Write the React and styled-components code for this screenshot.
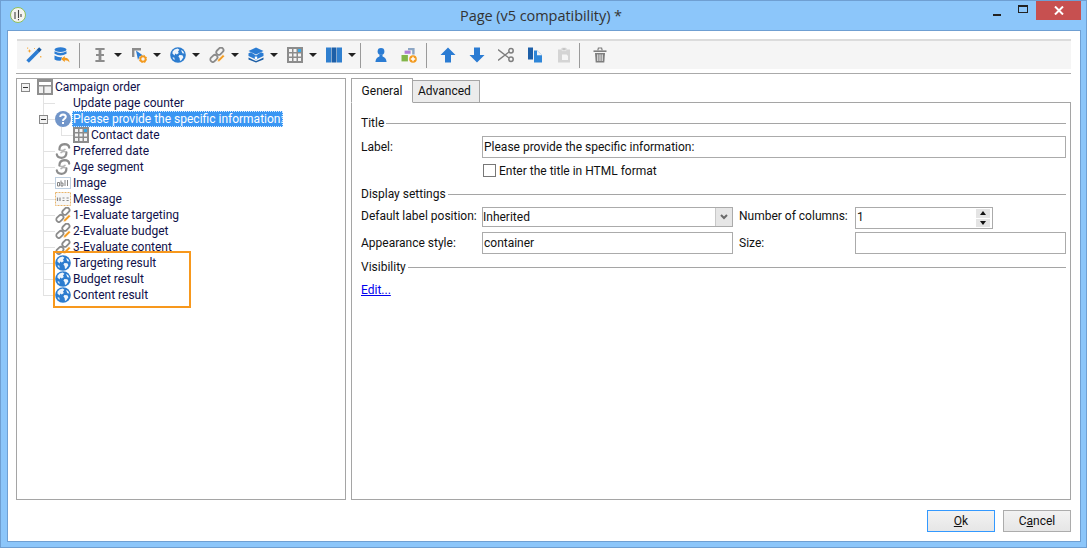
import React from 'react';
import styled, { createGlobalStyle } from 'styled-components';

const Global = createGlobalStyle`
  html, body { margin: 0; padding: 0; background: #fff; }
  body { font-family: "Roboto", "Liberation Sans", sans-serif; font-size: 12px; color: #111; }
`;

const Window = styled.div`
  box-sizing: border-box; width: 1087px; height: 548px;
  background: #8cc6fa; border: 1px solid #6f9fd2;
  display: flex; flex-direction: column;
`;
const TitleBar = styled.div`
  height: 29px; display: flex; align-items: flex-start; position: relative; flex: none;
`;
const AppLogo = styled.svg`width: 16px; height: 16px; margin: 6px 0 0 9px; flex: none;`;
const TitleText = styled.div`
  flex: 1; text-align: center; font-size: 14.5px; line-height: 29px; color: #333; padding-left: 72px;
  font-family: "Open Sans", sans-serif; letter-spacing: -0.05px;
`;
const WinControls = styled.div`display: flex; align-items: flex-start; margin-right: 5px; flex: none;`;
const MinBtn = styled.div`
  width: 26px; height: 19px; display: flex; align-items: flex-end; justify-content: center; padding-bottom: 4px; box-sizing: border-box;
  &::before { content: ""; width: 8px; height: 2px; background: #222; }
`;
const MaxBtn = styled.div`
  width: 26px; height: 19px; display: flex; align-items: center; justify-content: center; padding-bottom: 3px; box-sizing: border-box;
  &::before { content: ""; width: 8px; height: 5px; border: 1px solid #222; border-top-width: 2px; }
`;
const CloseBtn = styled.div`
  width: 45px; height: 19px; background: #c75050; display: flex; align-items: center; justify-content: center; margin-left: 0;
`;
const Client = styled.div`
  box-sizing: border-box; height: 512px; margin: 0 5px 0 6px; background: #fff; border: 1px solid #6f9fd2;
  padding: 8px 9px 0 9px; display: flex; flex-direction: column; flex: none;
`;
const Toolbar = styled.div`
  box-sizing: border-box; height: 30px; background: #f5f5f5; border-top: 2px solid #dcdcdc;
  display: flex; align-items: center; padding-left: 3px; flex: none;
`;
const ToolButton = styled.div`
  width: ${p => p.$w || 28}px; height: 28px; display: flex; align-items: center; justify-content: center; flex: none;
  svg { width: 16px; height: 16px; display: block; }
`;
const Drop = styled.div`width: 39px; height: 28px; display: flex; align-items: center; flex: none;`;
const DropIcon = styled(ToolButton)`width: 28px;`;
const Caret = styled.div`
  width: 0; height: 0; margin-left: 0; border-left: 4px solid transparent; border-right: 4px solid transparent; border-top: 4px solid #222;
`;
const ToolSep = styled.div`
  width: 1px; height: 25px; background: #9a9a9a; flex: none; margin: 0 6px 0 ${p => p.$ml}px;
`;
const Rule = styled.div`height: 1px; background: #aaa; margin-top: 4px; margin-left: -1px; flex: none;`;
const Main = styled.div`height: 422px; margin-top: 4px; margin-left: -1px; display: flex; gap: 5px; flex: none;`;
const TreePanel = styled.div`
  box-sizing: border-box; width: 330px; border: 1px solid #a5a5a5; display: flex; flex-direction: column; flex: none;
  padding-top: 0;
`;
const Row = styled.div`display: flex; height: 16px; align-items: center; flex: none;`;
const Cell = styled.div`
  height: 16px; flex: none; width: ${p => p.$w}px; display: flex; align-items: center; position: relative;
  background-repeat: no-repeat;
  ${p => p.$v ? `background-image: linear-gradient(#e2e2e2,#e2e2e2); background-size: 1px ${p.$v === 'half' ? '8px' : '16px'}; background-position: ${p.$x}px 0;` : ''}
  &::after {
    ${p => p.$h ? `content: ""; position: absolute; left: ${p.$x}px; right: 0; top: 8px; height: 1px; background: #e2e2e2;` : ''}
  }
`;
const Expander = styled.div`
  box-sizing: border-box; width: 9px; height: 9px; margin-left: ${p => p.$ml}px; border: 1px solid #888; background: #f2f2f2;
  display: flex; align-items: center; justify-content: center; position: relative; z-index: 1; flex: none;
  &::before { content: ""; width: 5px; height: 1px; background: #333; }
`;
const TreeIcon = styled.svg`width: 16px; height: 16px; flex: none; display: block;`;
const IconSpacer = styled.div`width: 16px; height: 16px; flex: none;`;
const RowLabel = styled.div`
  margin-left: 2px; line-height: 16px; white-space: nowrap; color: #10104a;
`;
const SelectedLabel = styled.div`
  margin-left: 1px; line-height: 14px; padding: 0; height: 14px; white-space: nowrap; color: #fff; background: #3a96f3;
  border: 1px dotted #d8ecff; width: 209px;
`;
const Highlight = styled.div`
  position: relative;
  &::after {
    content: ""; position: absolute; left: 36px; top: -4px; width: 134px; height: 53px; border: 2px solid #f7981d; pointer-events: none;
  }
`;
const Right = styled.div`flex: 1; display: flex; flex-direction: column; min-width: 0;`;
const Tabs = styled.div`display: flex; align-items: flex-end; height: 25px; flex: none; margin-bottom: -1px;`;
const TabActive = styled.div`
  box-sizing: border-box; width: 62px; height: 25px; background: #fff; border: 1px solid #a5a5a5; border-bottom: 1px solid #fff;
  text-align: center; line-height: 24px; position: relative; z-index: 1; padding-top: 0;
`;
const Tab = styled.div`
  box-sizing: border-box; width: 68px; height: 23px; margin-left: -1px; background: #ececec; border: 1px solid #a5a5a5;
  text-align: left; padding-left: 5px; line-height: 21px;
`;
const TabPanel = styled.div`
  box-sizing: border-box; flex: 1; border: 1px solid #a5a5a5; padding: 12px 4px 0 9px; display: flex; flex-direction: column;
`;
const SectionHead = styled.div`
  display: flex; align-items: center; gap: 2px; height: 16px; margin-top: ${p => p.$mt || 0}px; line-height: 16px;
  &::after { content: ""; flex: 1; height: 1px; background: #a5a5a5; }
`;
const FieldLabel = styled.div`white-space: nowrap; line-height: 16px;`;
const Field = styled.div`
  box-sizing: border-box; height: ${p => p.$h}px; border: 1px solid #ababab; background: #fff;
  padding-left: ${p => p.$pl ?? 2}px; display: flex; align-items: center; white-space: nowrap; width: ${p => p.$w ? p.$w + 'px' : 'auto'};
`;
const LabelRow = styled.div`display: grid; grid-template-columns: 121px 1fr; align-items: center; margin-top: 5px;`;
const CheckRow = styled.div`display: flex; align-items: center; margin: 6px 0 0 122px; height: 13px;`;
const CheckBox = styled.div`box-sizing: border-box; width: 13px; height: 13px; border: 1px solid #777; background: #fff; flex: none;`;
const CheckLabel = styled.div`margin: 2px 0 0 3px; line-height: 13px;`;
const FieldGrid = styled.div`
  display: grid; grid-template-columns: 121px 251px 122px 1fr; margin-top: ${p => p.$mt}px; align-items: start;
`;
const SideLabel = styled(FieldLabel)`padding-left: 6px; margin-top: ${p => p.$mt || 0}px;`;
const MainLabel = styled(FieldLabel)`margin-top: ${p => p.$mt || 0}px;`;
const FieldValue = styled.div`flex: 1; margin-top: ${p => p.$mt || 0}px;`;
const ComboArrow = styled.div`
  width: 16px; height: 18px; background: #e6e6e6; border-left: 1px solid #c8c8c8; display: flex; align-items: center; justify-content: center; flex: none;
`;
const Spin = styled.div`
  width: 14px; height: 18px; margin-right: 2px; display: flex; flex-direction: column; gap: 1px; background: #fff; flex: none; border: 0;
`;
const SpinPart = styled.div`
  flex: 1; background: #e4e4e4; display: flex; align-items: center; justify-content: center;
  &::before { content: ""; width: 0; height: 0; border-left: 3px solid transparent; border-right: 3px solid transparent;
    ${p => p.$up ? 'border-bottom: 4px solid #111;' : 'border-top: 4px solid #111;'} }
`;
const EditLink = styled.a`
  margin-top: 7px; line-height: 16px; color: #0000ee; text-decoration: underline; align-self: flex-start;
`;
const Footer = styled.div`display: flex; justify-content: flex-end; gap: 8px; margin-top: 10px; flex: none;`;
const DlgButton = styled.div`
  box-sizing: border-box; width: 68px; height: 22px; text-align: center; line-height: 20px;
  background: linear-gradient(#f2f2f2, #e6e6e6); border: 1px solid ${p => p.$def ? '#3399ff' : '#acacac'};
  u { text-decoration: underline; }
`;

const Globe = () => (
  <>
    <circle cx="8" cy="8" r="7.8" fill="#2c7ccf" />
    <path d="M4.5 2.6 7.6 1.4 9.4 2.8 8 4.6 8.8 6 6.8 7.4 5.2 6.6 4.6 8.6 2.4 6.6 2.6 4.4Z" fill="#eef5fc" />
    <path d="M9.4 8 12.4 8.2 13.4 10.2 11.4 13.2 10 14 9.6 11 8.4 9.6Z" fill="#eef5fc" />
    <path d="M11 3 13 4 14.4 6.4 12.4 6.2Z" fill="#eef5fc" />
    <path d="M2.6 10 4.4 10.8 4.8 13 3 12Z" fill="#cfe2f5" />
  </>
);
const Chain = ({ orange }) => (
  <>
    <g fill="none" stroke="#8b8b8b" strokeWidth="1.8">
      <rect x="8.4" y="0.2" width="5" height="8" rx="2.5" transform="rotate(45 10.9 4.2)" />
      <rect x="2.4" y="7.4" width="5" height="8" rx="2.5" transform="rotate(45 4.9 11.4)" />
    </g>
    {orange && <path d="M8.4 15 9 12.6 14 7.6 15.6 9.2 10.6 14.2Z" fill="#f39a1e" stroke="#fff" strokeWidth="0.5" />}
  </>
);
const BrokenChain = () => (
  <g fill="none" strokeLinecap="round">
    <path d="M4.4 6.6 Q4.4 1.6 9.4 1.2 Q14 1.4 14.2 4.6" stroke="#8d8d8d" strokeWidth="2.2" />
    <path d="M5.6 7.2 Q8 8 10 6.4" stroke="#b5b5b5" strokeWidth="1.6" />
    <path d="M11.4 9.4 Q11.6 14.6 6.6 14.8 Q2.2 14.6 1.8 11.4" stroke="#8d8d8d" strokeWidth="2.2" />
    <path d="M10.4 8.8 Q8 8 6 9.6" stroke="#b5b5b5" strokeWidth="1.6" />
  </g>
);
const TableGrid = () => (
  <>
    <rect x="0" y="0" width="16" height="16" fill="#8c8c8c" />
    {[2, 6.5, 11].map(x => [2, 6.5, 11].map(y => (
      <rect key={`${x}${y}`} x={x} y={y} width="3" height="3" fill={x === 11 && y === 2 ? '#39a9e8' : '#f4f4f4'} />
    )))}
  </>
);

const I = {
  root: <><rect width="16" height="16" fill="#8f8f8f" /><rect x="2" y="3" width="12" height="3" fill="#fff" /><rect x="2" y="7.5" width="4" height="6.5" fill="#f0f0f0" /><rect x="7.5" y="7.5" width="6.5" height="6.5" fill="#f0f0f0" /></>,
  question: <><circle cx="8" cy="8" r="8" fill="#7195c9" /><path d="M5.2 6 Q5.4 3.4 8 3.4 Q10.8 3.5 10.8 5.8 Q10.8 7 9.4 7.8 Q8 8.6 8 10" fill="none" stroke="#fff" strokeWidth="2" /><rect x="7" y="11" width="2" height="2" fill="#fff" /></>,
  abl: <><rect x="0.5" y="2.5" width="15" height="11" fill="#fff" stroke="#7f9fbf" strokeDasharray="1 1" /><path d="M2.5 11V7.5h2V11h-2M6 5.5V11h2V8H6M10 5v6M12.5 5v6" fill="none" stroke="#777" strokeWidth="0.9" /></>,
  msg: <><rect x="0.5" y="1.5" width="15" height="13" fill="#f7f7f7" stroke="#e9b46a" strokeDasharray="2 1" /><path d="M2.5 10V6.5M5 10V6.5M7.5 7h2M7.5 9.5h2M11.5 7h2.2M11.5 9.5h2.2" stroke="#8a8a8a" strokeWidth="1.2" /></>,
};

const TreeSvg = ({ children }) => <TreeIcon viewBox="0 0 16 16">{children}</TreeIcon>;

function Level1({ icon, label, last }) {
  return (
    <Row>
      <Cell $w={20} />
      <Cell $w={18} $x={6} $v={last ? 'half' : 'full'} $h />
      {icon ? <TreeSvg>{icon}</TreeSvg> : <IconSpacer />}
      <RowLabel>{label}</RowLabel>
    </Row>
  );
}

const Svg = ({ children, vb = '0 0 16 16' }) => <svg viewBox={vb}>{children}</svg>;

const T = {
  wand: <Svg><path d="M1.6 14.4 11.8 4.2" stroke="#2b7cd3" strokeWidth="3.6" /><path d="M11.8 4.2 14.4 1.6" stroke="#1c5ea6" strokeWidth="3.6" /><path d="M3.5 2 4 3.6 5.6 4 4 4.5 3.5 6 3 4.5 1.4 4 3 3.6Z" fill="#f39a1e" /><path d="M1 0.5h1.2v1.2H1zM14 9h1.4v1.4H14zM8 1h1v1H8z" fill="#f6b352" /></Svg>,
  db: <Svg><ellipse cx="6.5" cy="2.6" rx="6" ry="2.4" fill="#2b7cd3" /><path d="M0.5 4.2Q6.5 7.6 12.5 4.2V6.8Q6.5 10 0.5 6.8Z" fill="#2b7cd3" /><path d="M0.5 8.6Q5 10.8 8 10L7 13.6Q3 14 0.5 12.4Z" fill="#2b7cd3" /><path d="M15.6 15.6Q15 10.6 10.8 10.8V9L7 12 10.8 15V13.2Q14 13 15.6 15.6Z" fill="#f39a1e" /></Svg>,
  cursor: <Svg vb="0 0 16 16"><path d="M3.4 1h9.2v2H9.4v4h2.6v2H9.4v4h3.2v2H3.4v-2h3.2V9H4V7h2.6V3H3.4Z" fill="#8c8c8c" /></Svg>,
  pointer: <Svg><path d="M1 1h9v2.4H3.4V10H1Z" fill="#8c8c8c" /><path d="M5 3.6 12 8.6 8.6 9.2 7 13Z" fill="#2b7cd3" /><circle cx="12" cy="12" r="2.6" fill="none" stroke="#f39a1e" strokeWidth="1.8" /><circle cx="12" cy="12" r="3.8" fill="none" stroke="#f39a1e" strokeWidth="1" strokeDasharray="1.4 1.6" /></Svg>,
  globe: <Svg><Globe /></Svg>,
  link: <Svg><Chain orange /></Svg>,
  layers: <Svg><path d="M8 0.5 15.5 4 8 7.5 0.5 4Z" fill="#2b7cd3" /><path d="M0.5 6.2 3 5.2 8 8.6 13 5.2 15.5 6.2V9L8 12.6 0.5 9Z" fill="#2b7cd3" /><path d="M0.5 10.6 5.5 13 8 14 10.5 13 15.5 10.6V12.4L8 15.6 0.5 12.4Z" fill="#1c5ea6" /><rect x="6.8" y="9.6" width="2.4" height="2.4" fill="#fff" /></Svg>,
  table: <Svg><TableGrid /></Svg>,
  cols: <Svg><rect x="0" y="0.5" width="5" height="15" fill="#2f7fcf" /><rect x="5.5" y="0.5" width="5" height="15" fill="#1d5fa8" /><rect x="11" y="0.5" width="5" height="15" fill="#2f7fcf" /></Svg>,
  person: <Svg><circle cx="8" cy="4.4" r="3.4" fill="#2b7cd3" /><path d="M6.6 7.4h2.8L9.6 9.6Q13 10.4 13.6 15H2.4Q3 10.4 6.4 9.6Z" fill="#2b7cd3" /></Svg>,
  add: <Svg><rect x="3.6" y="3.6" width="6" height="3.2" fill="#b07fd8" /><path d="M7 1h6.6v6.4h-2.4V3.2H7Z" fill="#8ca6c4" /><rect x="0.5" y="8" width="6.4" height="6.4" fill="#82b54a" /><circle cx="12" cy="12" r="3.8" fill="#f39a1e" /><path d="M9.8 12h4.4M12 9.8v4.4" stroke="#fff" strokeWidth="1.4" /></Svg>,
  up: <Svg><path d="M8 0.5 15.5 8H11V15.5H5V8H0.5Z" fill="#2b7cd3" /></Svg>,
  down: <Svg><path d="M8 15.5 15.5 8H11V0.5H5V8H0.5Z" fill="#2b7cd3" /></Svg>,
  scissors: <Svg><circle cx="13" cy="3.8" r="2.2" fill="none" stroke="#7e7e7e" strokeWidth="1.5" /><circle cx="13" cy="12.2" r="2.2" fill="none" stroke="#7e7e7e" strokeWidth="1.5" /><path d="M0 2.6 11 11M0 13.4 11 5" stroke="#7e7e7e" strokeWidth="1.4" /></Svg>,
  copy: <Svg><path d="M1 0.5h5V12.5H1Z" fill="#1d5fa8" /><path d="M7 3.6h3.2L15 8.2V15.5H7Z" fill="#2f86d8" /><path d="M10 3.6 15 8.2H10Z" fill="#f5f5f5" /></Svg>,
  paste: <Svg><path d="M2 2.4h3V1.2h6v1.2h3V15.5H2Z" fill="#d4d4d4" /><path d="M6 0.6h4V3.6H6Z" fill="#c4c4c4" stroke="#f5f5f5" strokeWidth="0.6" /><path d="M6 7.6h4.6L12 9v4H6Z" fill="#f5f5f5" /></Svg>,
  trash: <Svg><path d="M1.5 3.4h13V5h-13Z" fill="#7e7e7e" /><path d="M5.8 3.4 6.4 1h3.2l.6 2.4" fill="none" stroke="#7e7e7e" strokeWidth="1.2" /><path d="M3 6h10l-.7 9.6H3.7Z" fill="#7e7e7e" /><path d="M5.8 7.4v6.6M8 7.4v6.6M10.2 7.4v6.6" stroke="#f5f5f5" strokeWidth="1" /></Svg>,
};

const DropTool = ({ icon }) => (
  <Drop>
    <DropIcon>{icon}</DropIcon>
    <Caret />
  </Drop>
);

export default function App() {
  return (
    <>
      <Global />
      <Window>
        <TitleBar>
          <AppLogo viewBox="0 0 16 16">
            <circle cx="8" cy="8" r="7.5" fill="#f4f4f0" stroke="#8fbf58" strokeWidth="1" />
            <path d="M5 5v7M8.5 3v8M11 7v3M8.5 12v1.2" stroke="#444" strokeWidth="1.1" fill="none" />
          </AppLogo>
          <TitleText>Page (v5 compatibility) *</TitleText>
          <WinControls>
            <MinBtn />
            <MaxBtn />
            <CloseBtn>
              <svg width="10" height="9" viewBox="0 0 10 9"><path d="M1 0.5 9 8.5M9 0.5 1 8.5" stroke="#fff" strokeWidth="2" /></svg>
            </CloseBtn>
          </WinControls>
        </TitleBar>
        <Client>
          <Toolbar>
            <ToolButton>{T.wand}</ToolButton>
            <ToolButton>{T.db}</ToolButton>
            <ToolSep $ml={3} />
            <DropTool icon={T.cursor} />
            <DropTool icon={T.pointer} />
            <DropTool icon={T.globe} />
            <DropTool icon={T.link} />
            <DropTool icon={T.layers} />
            <DropTool icon={T.table} />
            <DropTool icon={T.cols} />
            <ToolSep $ml={1} />
            <ToolButton>{T.person}</ToolButton>
            <ToolButton>{T.add}</ToolButton>
            <ToolSep $ml={3} />
            <ToolButton $w={29}>{T.up}</ToolButton>
            <ToolButton $w={29}>{T.down}</ToolButton>
            <ToolButton $w={29}>{T.scissors}</ToolButton>
            <ToolButton $w={29}>{T.copy}</ToolButton>
            <ToolButton $w={29}>{T.paste}</ToolButton>
            <ToolSep $ml={1} />
            <ToolButton>{T.trash}</ToolButton>
          </Toolbar>
          <Rule />
          <Main>
            <TreePanel>
              <Row>
                <Cell $w={20}><Expander $ml={4} /></Cell>
                <TreeSvg>{I.root}</TreeSvg>
                <RowLabel>Campaign order</RowLabel>
              </Row>
              <Level1 label="Update page counter" />
              <Row>
                <Cell $w={20} />
                <Cell $w={18} $x={6} $v="full" $h><Expander $ml={2} /></Cell>
                <TreeSvg>{I.question}</TreeSvg>
                <SelectedLabel>Please provide the specific information:</SelectedLabel>
              </Row>
              <Row>
                <Cell $w={20} />
                <Cell $w={18} $x={6} $v="full" />
                <Cell $w={18} $x={6} $v="half" $h />
                <TreeSvg><TableGrid /></TreeSvg>
                <RowLabel>Contact date</RowLabel>
              </Row>
              <Level1 icon={<BrokenChain />} label="Preferred date" />
              <Level1 icon={<BrokenChain />} label="Age segment" />
              <Level1 icon={I.abl} label="Image" />
              <Level1 icon={I.msg} label="Message" />
              <Level1 icon={<Chain orange />} label="1-Evaluate targeting" />
              <Level1 icon={<Chain orange />} label="2-Evaluate budget" />
              <Level1 icon={<Chain orange />} label="3-Evaluate content" />
              <Highlight>
                <Level1 icon={<Globe />} label="Targeting result" />
                <Level1 icon={<Globe />} label="Budget result" />
                <Level1 icon={<Globe />} label="Content result" last />
              </Highlight>
            </TreePanel>
            <Right>
              <Tabs>
                <TabActive>General</TabActive>
                <Tab>Advanced</Tab>
              </Tabs>
              <TabPanel>
                <SectionHead>Title</SectionHead>
                <LabelRow>
                  <FieldLabel>Label:</FieldLabel>
                  <Field $h={22} $pl={1}>Please provide the specific information:</Field>
                </LabelRow>
                <CheckRow>
                  <CheckBox />
                  <CheckLabel>Enter the title in HTML format</CheckLabel>
                </CheckRow>
                <SectionHead $mt={9}>Display settings</SectionHead>
                <FieldGrid $mt={5}>
                  <MainLabel $mt={1}>Default label position:</MainLabel>
                  <Field $h={20} $pl={0}>
                    <FieldValue>Inherited</FieldValue>
                    <ComboArrow>
                      <svg width="8" height="6" viewBox="0 0 8 6"><path d="M1 1 4 4 7 1" fill="none" stroke="#6a6a6a" strokeWidth="2" /></svg>
                    </ComboArrow>
                  </Field>
                  <SideLabel $mt={1}>Number of columns:</SideLabel>
                  <Field $h={22} $w={138} $pl={1}>
                    <FieldValue $mt={-2}>1</FieldValue>
                    <Spin><SpinPart $up /><SpinPart /></Spin>
                  </Field>
                </FieldGrid>
                <FieldGrid $mt={3}>
                  <MainLabel $mt={3}>Appearance style:</MainLabel>
                  <Field $h={22} $pl={1}>container</Field>
                  <SideLabel $mt={3}>Size:</SideLabel>
                  <Field $h={22} />
                </FieldGrid>
                <SectionHead $mt={5}>Visibility</SectionHead>
                <EditLink>Edit...</EditLink>
              </TabPanel>
            </Right>
          </Main>
          <Footer>
            <DlgButton $def><u>O</u>k</DlgButton>
            <DlgButton>C<u>a</u>ncel</DlgButton>
          </Footer>
        </Client>
      </Window>
    </>
  );
}
